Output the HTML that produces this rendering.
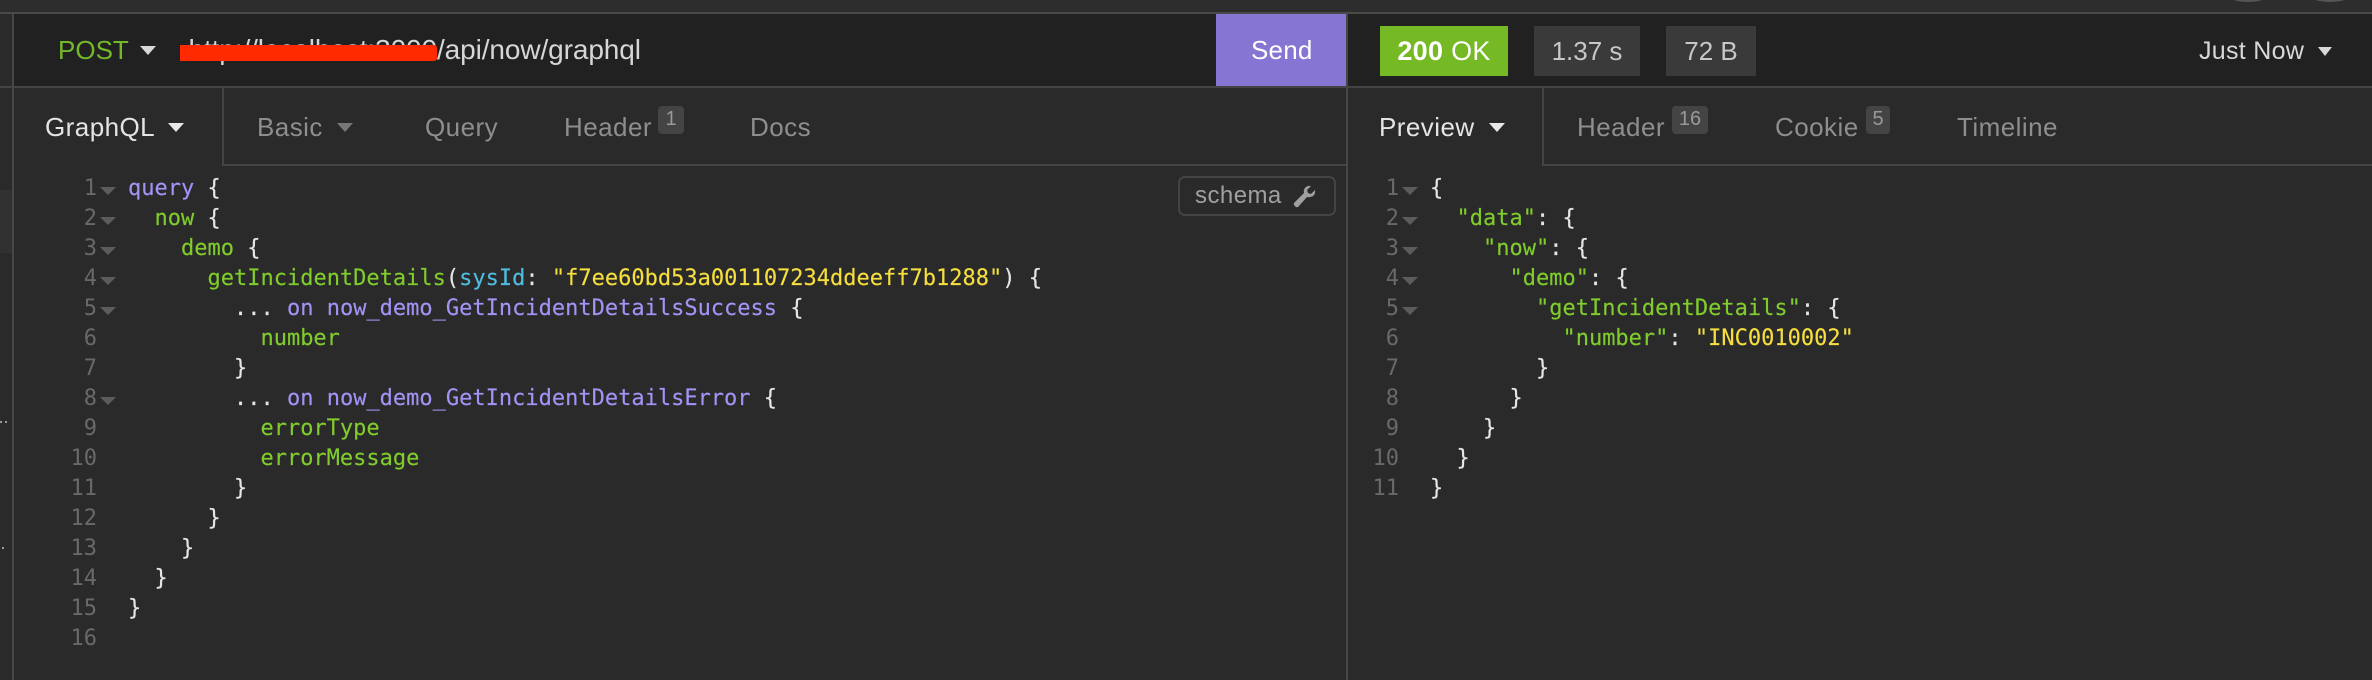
<!DOCTYPE html>
<html><head><meta charset="utf-8">
<style>
html,body{margin:0;padding:0;background:#2a2a2a}
#r{position:relative;width:2372px;height:680px;overflow:hidden;background:#2a2a2a;font-family:"Liberation Sans",sans-serif}
.a{position:absolute}
.t{position:absolute;white-space:pre;font-size:26px;line-height:30px;color:#8e8e8e;letter-spacing:.45px}
.b{position:absolute;background:#3a3a3a;color:#c8c8c8;font-size:26px;line-height:50px;text-align:center;top:26px;height:50px}
.c{position:absolute;white-space:pre;font-family:"DejaVu Sans Mono","Liberation Mono",monospace;font-size:22px;line-height:30px;color:#e6e6e6;-webkit-text-stroke:.15px}
.n{position:absolute;white-space:pre;font-family:"DejaVu Sans Mono","Liberation Mono",monospace;font-size:22px;line-height:30px;color:#696969;text-align:right}
.g{color:#80cc2c}.p{color:#a293f5}.y{color:#f5de3e}.u{color:#4fbce0}
.s{position:absolute;top:106px;height:28px;line-height:26px;background:#444;color:#999;font-size:20px;border-radius:4px;text-align:center}
</style></head><body><div id="r">
<div class="a" style="left:0;top:0;width:2372px;height:13px;background:#2d2d2d"></div>
<div class="a" style="left:0;top:12px;width:2372px;height:2px;background:#4a4a4a"></div>
<div class="a" style="left:2222px;top:-22px;width:48px;height:20px;border:2px solid #555;border-radius:50%"></div>
<div class="a" style="left:2304px;top:-22px;width:48px;height:20px;border:2px solid #555;border-radius:50%"></div>

<div class="a" style="left:13px;top:14px;width:2359px;height:72px;background:#212121"></div>
<div class="a" style="left:0;top:86px;width:2372px;height:2px;background:#444"></div>
<div class="a" style="left:12px;top:14px;width:2px;height:666px;background:#464646"></div>
<div class="a" style="left:0;top:190px;width:12px;height:63px;background:#313131"></div>
<div class="a" style="left:0;top:421px;width:2px;height:2px;background:#999"></div>
<div class="a" style="left:5px;top:421px;width:2px;height:2px;background:#999"></div>
<div class="a" style="left:2px;top:547px;width:2px;height:2px;background:#999"></div>

<div class="t" style="left:58px;top:35px;color:#74b928;letter-spacing:0">POST</div>
<svg class="a" style="left:140px;top:45px" width="16" height="11"><path d="M0 1H16L8 10Z" fill="#d8d8d8"/></svg>
<div class="t" style="right:1935px;top:35px;color:#d6d6d6;font-size:28px;letter-spacing:-.1px">http://localhost:3000</div>
<div class="t" style="left:437px;top:35px;color:#d6d6d6;font-size:28px;letter-spacing:-.1px">/api/now/graphql</div>
<div class="a" style="left:180px;top:45px;width:257px;height:16px;background:#ff2a00;border-radius:0 3px 3px 0"></div>

<div class="a" style="left:1216px;top:14px;width:130px;height:72px;background:#8675d3"></div>
<div class="t" style="left:1251px;top:35px;color:#fff;letter-spacing:.2px">Send</div>
<div class="a" style="left:1346px;top:14px;width:2px;height:666px;background:#464646"></div>

<div class="b" style="left:1380px;width:128px;background:#75ba24;color:#fff;font-size:27px;letter-spacing:.3px"><b style="font-weight:700">200</b> OK</div>
<div class="b" style="left:1534px;width:106px">1.37 s</div>
<div class="b" style="left:1666px;width:90px">72 B</div>
<div class="t" style="left:2199px;top:36px;color:#d8d8d8;font-size:25px;letter-spacing:.3px">Just Now</div>
<svg class="a" style="left:2318px;top:47px" width="14" height="10"><path d="M0 0H14L7 9Z" fill="#d8d8d8"/></svg>

<div class="a" style="left:224px;top:164px;width:1122px;height:2px;background:#444"></div>
<div class="a" style="left:222px;top:88px;width:2px;height:78px;background:#444"></div>
<div class="a" style="left:1544px;top:164px;width:828px;height:2px;background:#444"></div>
<div class="a" style="left:1542px;top:88px;width:2px;height:78px;background:#444"></div>

<div class="t" style="left:45px;top:112px;color:#e4e4e4">GraphQL</div>
<svg class="a" style="left:168px;top:122px" width="16" height="11"><path d="M0 1H16L8 10Z" fill="#e8e8e8"/></svg>
<div class="t" style="left:257px;top:112px">Basic</div>
<svg class="a" style="left:337px;top:122px" width="16" height="11"><path d="M0 1H16L8 10Z" fill="#777"/></svg>
<div class="t" style="left:425px;top:112px">Query</div>
<div class="t" style="left:564px;top:112px">Header</div>
<div class="s" style="left:658px;width:26px">1</div>
<div class="t" style="left:750px;top:112px">Docs</div>

<div class="t" style="left:1379px;top:112px;color:#e4e4e4">Preview</div>
<svg class="a" style="left:1489px;top:122px" width="16" height="11"><path d="M0 1H16L8 10Z" fill="#e8e8e8"/></svg>
<div class="t" style="left:1577px;top:112px">Header</div>
<div class="s" style="left:1672px;width:36px">16</div>
<div class="t" style="left:1775px;top:112px">Cookie</div>
<div class="s" style="left:1866px;width:24px">5</div>
<div class="t" style="left:1957px;top:112px">Timeline</div>

<div class="a" style="left:1178px;top:176px;width:154px;height:36px;border:2px solid #444;border-radius:7px"></div>
<div class="t" style="left:1195px;top:181px;font-size:24px;color:#a0a0a0">schema</div>
<svg class="a" style="left:1292px;top:184px" width="24" height="24" viewBox="0 0 24 24"><path d="M2 19L12 9C11 5 14 1 19 2L15 6L16 9L19 10L23 6C24 11 20 14 15 13L6 23C4 24 1 21 2 19Z" fill="#a0a0a0"/></svg>

<div class="n" style="left:40px;top:174px;width:57px">1
2
3
4
5
6
7
8
9
10
11
12
13
14
15
16</div>
<svg class="a" style="left:100px;top:186px" width="16" height="250"><g fill="#5c5c5c"><path d="M0 1H16L8 9Z"/><path d="M0 31H16L8 39Z"/><path d="M0 61H16L8 69Z"/><path d="M0 91H16L8 99Z"/><path d="M0 121H16L8 129Z"/><path d="M0 211H16L8 219Z"/></g></svg>
<div class="c" style="left:128px;top:174px"><span class="p">query</span> {
  <span class="g">now</span> {
    <span class="g">demo</span> {
      <span class="g">getIncidentDetails</span>(<span class="u">sysId</span>: <span class="y">"f7ee60bd53a001107234ddeeff7b1288"</span>) {
        ... <span class="p">on</span> <span class="p">now_demo_GetIncidentDetailsSuccess</span> {
          <span class="g">number</span>
        }
        ... <span class="p">on</span> <span class="p">now_demo_GetIncidentDetailsError</span> {
          <span class="g">errorType</span>
          <span class="g">errorMessage</span>
        }
      }
    }
  }
}</div>

<div class="n" style="left:1340px;top:174px;width:59px">1
2
3
4
5
6
7
8
9
10
11</div>
<svg class="a" style="left:1402px;top:186px" width="16" height="130"><g fill="#5c5c5c"><path d="M0 1H16L8 9Z"/><path d="M0 31H16L8 39Z"/><path d="M0 61H16L8 69Z"/><path d="M0 91H16L8 99Z"/><path d="M0 121H16L8 129Z"/></g></svg>
<div class="c" style="left:1430px;top:174px">{
  <span class="g">"data"</span>: {
    <span class="g">"now"</span>: {
      <span class="g">"demo"</span>: {
        <span class="g">"getIncidentDetails"</span>: {
          <span class="g">"number"</span>: <span class="y">"INC0010002"</span>
        }
      }
    }
  }
}</div>
</div></body></html>
